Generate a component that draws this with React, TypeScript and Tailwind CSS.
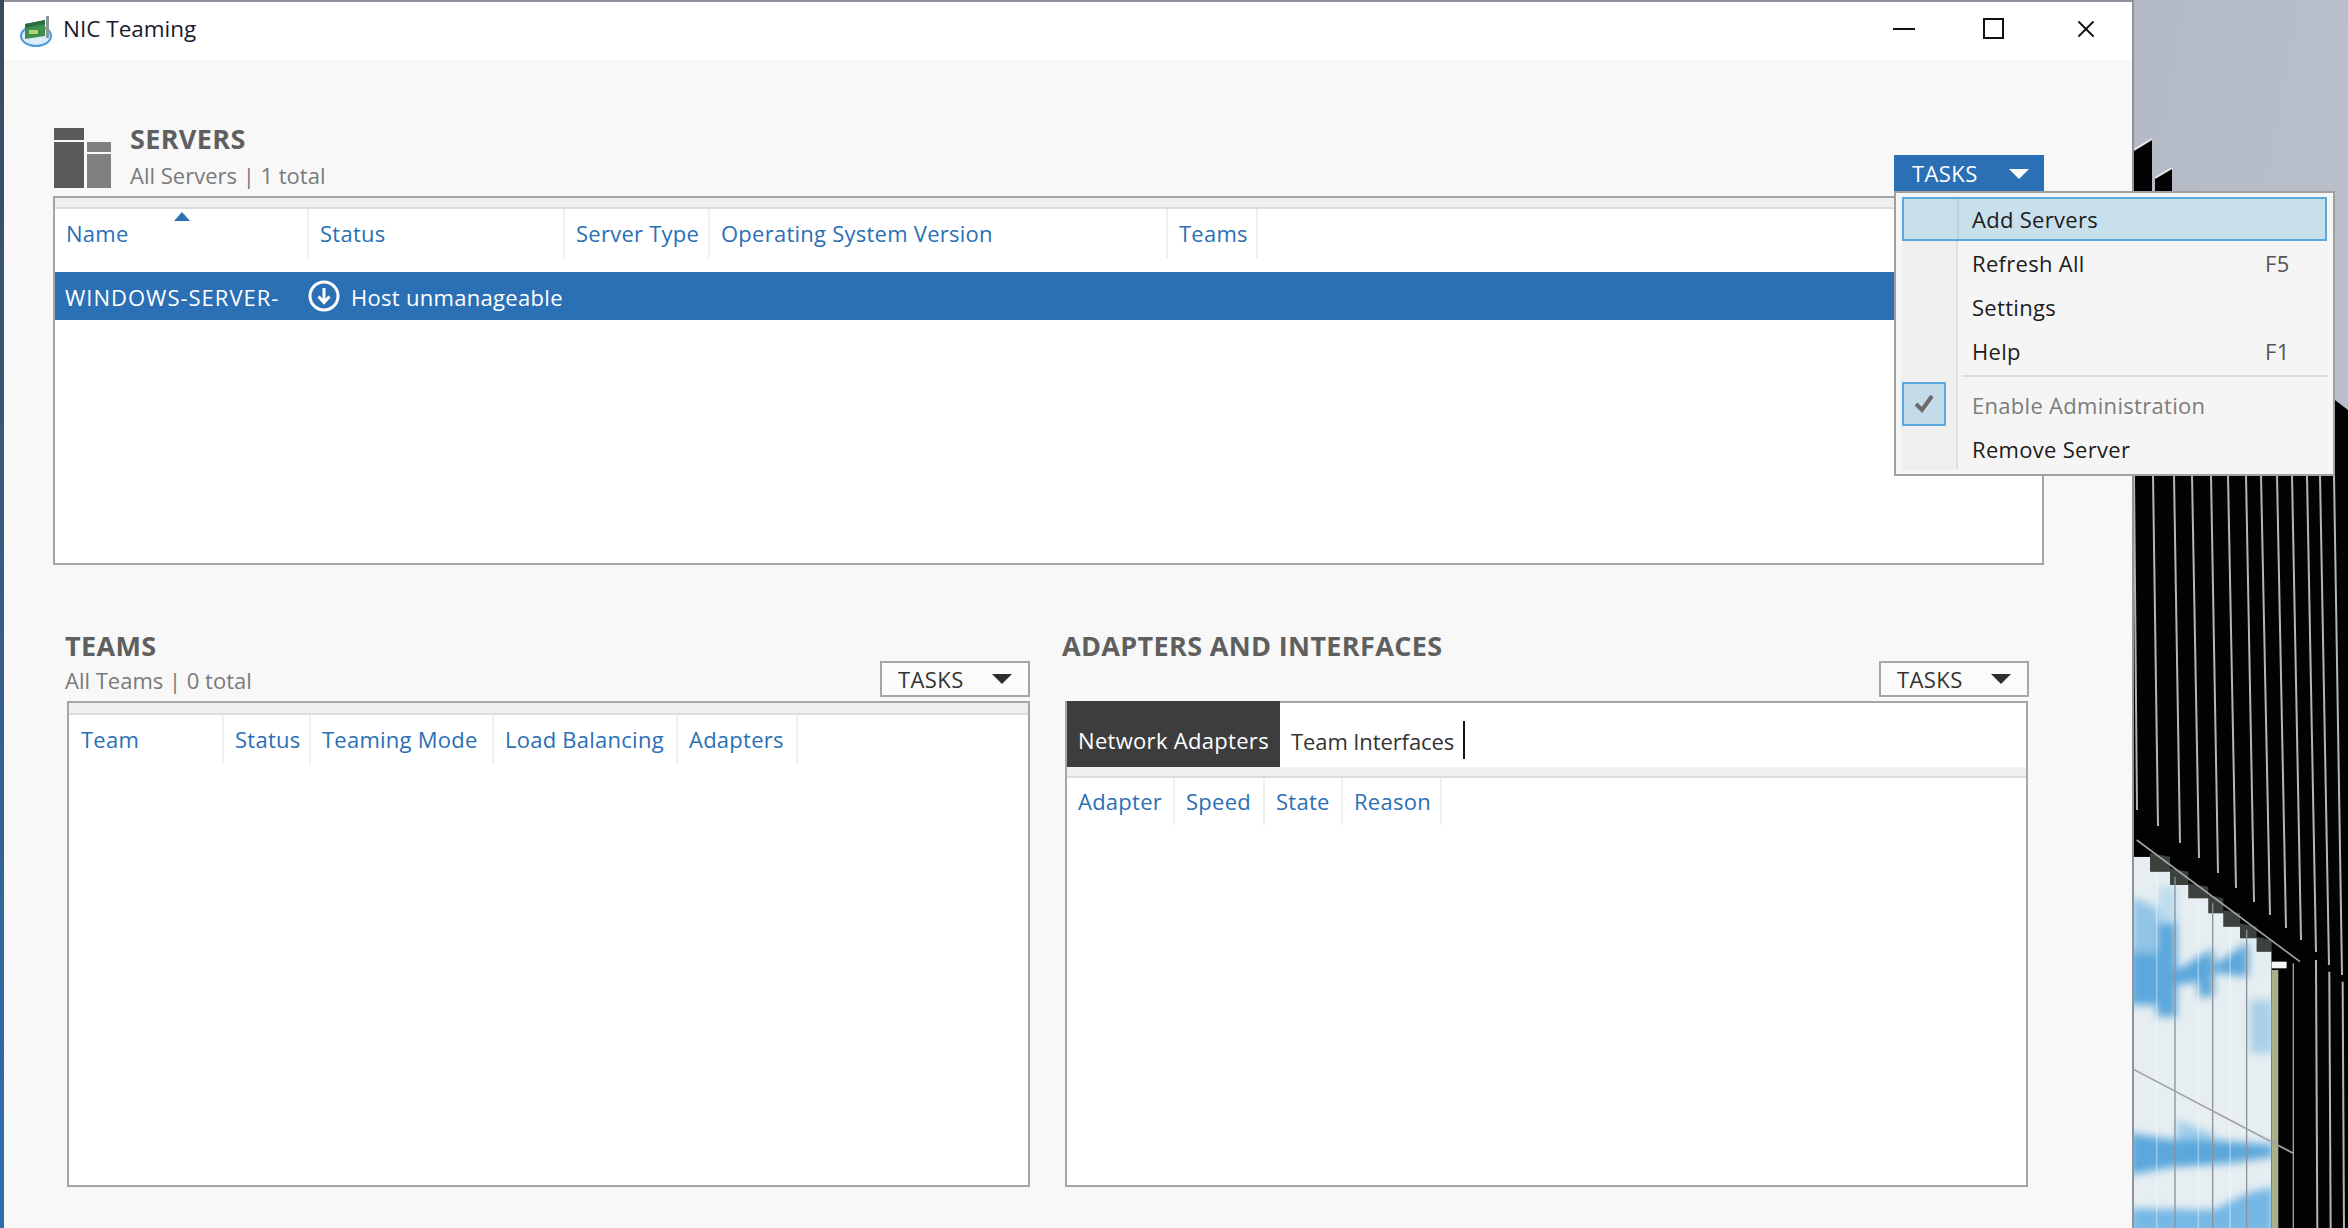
import React from 'react';
import { X } from 'lucide-react';

const font = "font-['Open_Sans','Noto_Sans',sans-serif]";

type Col = { label: string; width: string };

const serverCols: Col[] = [
  { label: 'Name', width: 'w-[254px]' },
  { label: 'Status', width: 'w-[256px]' },
  { label: 'Server Type', width: 'w-[145px]' },
  { label: 'Operating System Version', width: 'w-[458px]' },
  { label: 'Teams', width: 'w-[90px]' },
];

const teamCols: Col[] = [
  { label: 'Team', width: 'w-[155px]' },
  { label: 'Status', width: 'w-[87px]' },
  { label: 'Teaming Mode', width: 'w-[183px]' },
  { label: 'Load Balancing', width: 'w-[184px]' },
  { label: 'Adapters', width: 'w-[120px]' },
];

const adapterCols: Col[] = [
  { label: 'Adapter', width: 'w-[108px]' },
  { label: 'Speed', width: 'w-[90px]' },
  { label: 'State', width: 'w-[78px]' },
  { label: 'Reason', width: 'w-[99px]' },
];

const HeaderRow = ({ cols, left, height }: { cols: Col[]; left: string; height: string }) => (
  <div className={`flex ${height} relative`}>
    {cols.map((c, i) => (
      <div key={c.label} className={`${c.width} shrink-0 border-r-2 border-[#f0f0f0] flex items-center text-[22px] text-[#2b6fb5] whitespace-nowrap tracking-[0.25px] ${i === 0 ? left : 'pl-[11px]'}`}>
        {c.label}
      </div>
    ))}
  </div>
);

const TasksButton = () => (
  <div className="w-[150px] h-[36px] border-2 border-[#a6a6a6] bg-[#fbfbfb] flex items-center justify-between pl-[16px] pr-[16px] text-[22px] text-[#333333] tracking-[0.4px]">
    <span>TASKS</span>
    <svg width="20" height="12" viewBox="0 0 20 12"><path d="M0 1 H20 L10 11 Z" fill="#2e2e2e" /></svg>
  </div>
);

const NicIcon = () => (
  <svg width="32" height="32" viewBox="0 0 32 32" className="shrink-0">
    <ellipse cx="16" cy="21" rx="15" ry="10" fill="#dcecf8" stroke="#4a9bd8" strokeWidth="2" />
    <path d="M5 9 L25 5 V21 L5 24 Z" fill="#3f8f4f" />
    <path d="M5 9 L25 5 V9 L5 13 Z" fill="#2c6d3d" />
    <rect x="9" y="15" width="9" height="4" fill="#b4d46e" />
    <rect x="26" y="1" width="3" height="22" fill="#8a969c" />
  </svg>
);

const Wallpaper = () => {
  // top x, end y, end x of the light fins on the black facade
  const stripes: [number, number, number][] = [
    [2134, 810, 2137],
    [2153, 826, 2158],
    [2174, 843, 2180],
    [2192, 858, 2199],
    [2211, 873, 2218],
    [2228, 888, 2236],
    [2246, 902, 2254],
    [2261, 915, 2270],
    [2277, 928, 2286],
    [2292, 940, 2301],
    [2307, 952, 2316],
    [2320, 965, 2329],
    [2334, 975, 2342],
  ];
  // shaded steps under the diagonal beam, in crop coordinates (3x)
  const steps = [
    [15, 50, 60, 95],
    [60, 40, 120, 95],
    [120, 85, 175, 135],
    [175, 130, 235, 175],
    [235, 165, 280, 220],
    [280, 210, 330, 260],
    [330, 250, 380, 295],
    [380, 290, 425, 335],
  ];
  return (
    <svg viewBox="2134 0 214 1228" width="214" height="1228" className="block">
      <defs>
        <linearGradient id="sky" x1="0" y1="0" x2="1" y2="1">
          <stop offset="0" stopColor="#b3b9c5" />
          <stop offset="1" stopColor="#bcc3cf" />
        </linearGradient>
        <filter id="soft" x="-30%" y="-30%" width="160%" height="160%">
          <feGaussianBlur stdDeviation="13" />
        </filter>
        <clipPath id="glass">
          <path d="M10 50 H60 V95 H120 V135 H175 V175 H235 V220 H280 V260 H330 V295 H380 V335 H425 V1164 H10 Z" />
        </clipPath>
      </defs>
      <rect x="2134" y="0" width="214" height="1228" fill="url(#sky)" />
      {/* building: two fins above the menu, black facade below it */}
      <path d="M2134 150 L2152 139 V192 H2155 V178 L2172 168 V200 L2335 400 L2348 410 V1228 H2134 Z" fill="#020202" />
      <path d="M2134 150 L2152 139 M2155 178 L2172 168" stroke="#e8e8e8" strokeWidth="2" fill="none" />
      <g stroke="#b4b4b4" strokeWidth="2">
        {stripes.map(([x1, y, x2]) => (
          <line key={x1} x1={x1} y1={475} x2={x2} y2={y} />
        ))}
      </g>

      {/* glass front, drawn in the 3x coordinates of a crop at 2130,840 */}
      <g transform="translate(2130 840) scale(0.3333)">
        {steps.map(([x1, y1, x2, y2]) => (
          <path key={x1} d={`M${x1} ${y1} L${x2} ${y1 + 10} V${y2} H${x1} Z`} fill="#3b423e" />
        ))}
        <g clipPath="url(#glass)">
          <rect x="0" y="0" width="430" height="1164" fill="#e6eef1" />
          <g filter="url(#soft)">
            <path d="M5 170 L85 205 V340 L5 350 Z" fill="#93c5e6" />
            <path d="M85 140 H140 V260 H85 Z" fill="#bcdcee" />
            <path d="M360 480 H430 V640 H360 Z" fill="#a9d0e8" />
            <path d="M140 840 L245 880 V960 H140 Z" fill="#9fcde9" />
          </g>
          <g filter="url(#soft)" fill="#5ca7dc">
            <path d="M0 335 H85 V495 H0 Z" />
            <path d="M80 250 H140 V530 H80 Z" />
            <path d="M140 390 L250 325 V470 H205 V425 L140 435 Z" />
            <path d="M245 380 L355 305 V410 L300 405 L245 395 Z" />
            <path d="M0 880 L130 900 L245 900 L430 915 V950 L300 970 L130 980 L0 1005 Z" />
          </g>
          <path d="M0 1105 L250 1110 L350 1060 L430 1040 V1180 H0 Z" fill="#74b7e5" filter="url(#soft)" />
          <g stroke="#ffffff" strokeOpacity="0.35" strokeWidth="5">
            <line x1="80" y1="100" x2="80" y2="1164" />
            <line x1="205" y1="180" x2="205" y2="1164" />
            <line x1="300" y1="260" x2="300" y2="1164" />
          </g>
        </g>
        <path d="M425 365 H470 V385 H425 Z" fill="#f4f4f4" />
        <rect x="425" y="390" width="20" height="774" fill="#a9b08a" />
        <g stroke="#8d9298" strokeWidth="4">
          <line x1="8" y1="0" x2="8" y2="1164" />
          <line x1="135" y1="110" x2="135" y2="1164" />
          <line x1="248" y1="190" x2="248" y2="1164" />
          <line x1="350" y1="270" x2="350" y2="1164" />
        </g>
        <g stroke="#a0a4a6" strokeWidth="5">
          <line x1="10" y1="688" x2="490" y2="940" />
          <line x1="20" y1="0" x2="510" y2="365" />
          <line x1="490" y1="370" x2="490" y2="1164" strokeWidth="4" />
        </g>
        <g stroke="#b4b4b4" strokeWidth="6">
          <line x1="558" y1="360" x2="562" y2="1164" />
          <line x1="598" y1="395" x2="602" y2="1164" />
          <line x1="638" y1="425" x2="642" y2="1164" />
        </g>
      </g>
    </svg>
  );
};

const MenuRow = ({ label, shortcut, dim }: { label: string; shortcut?: string; dim?: boolean }) => (
  <div className={`h-[44px] flex items-center justify-between pl-[76px] pr-[44px] text-[22px] tracking-[0.3px] ${dim ? 'text-[#7c7c7c]' : 'text-[#1c1c1c]'}`}>
    <span>{label}</span>
    {shortcut && <span className="w-[24px] text-[#555555]">{shortcut}</span>}
  </div>
);

const TasksMenu = () => (
  <div className="absolute left-[1894px] top-[191px] w-[441px] h-[285px] border-2 border-[#a0a0a0] bg-[#f5f5f5] z-10 pt-[4px] pl-[6px] pr-[6px]">
    <div className="absolute left-[6px] top-[4px] bottom-[4px] w-[56px] bg-[#efefef] border-r-2 border-[#e0e0e0]" />
    <div className="relative h-[44px] flex items-center border-2 border-[#5aa9dc] bg-[#c8dfec] text-[22px] tracking-[0.3px] text-[#1c1c1c] pl-[68px]">
      <span>Add Servers</span>
      <div className="absolute left-[53px] top-0 bottom-0 w-[2px] bg-[#b9d2e0]" />
    </div>
    <div className="relative -mx-[6px]">
      <MenuRow label="Refresh All" shortcut="F5" />
      <MenuRow label="Settings" />
      <MenuRow label="Help" shortcut="F1" />
      <div className="h-[2px] ml-[66px] mr-[6px] bg-[#dcdcdc] mt-[2px] mb-[6px]" />
      <div className="relative">
        <MenuRow label="Enable Administration" dim />
        <div className="absolute left-[6px] top-[-1px] w-[44px] h-[44px] border-2 border-[#5aa9dc] bg-[#c4dcea] flex items-center justify-center">
          <svg width="22" height="20" viewBox="0 0 22 20"><path d="M3 10 L9 16 L19 2" fill="none" stroke="#6b6b6b" strokeWidth="4" /></svg>
        </div>
      </div>
      <MenuRow label="Remove Server" />
    </div>
  </div>
);

export default function App() {
  return (
    <div className={`relative flex w-[2348px] h-[1228px] overflow-hidden bg-white ${font}`}>
      {/* desktop sliver left of the window */}
      <div className="w-[4px] shrink-0 bg-gradient-to-b from-[#3a4a5c] to-[#2d6fb0]" />

      {/* window */}
      <div className="w-[2130px] h-[1228px] shrink-0 flex flex-col border-t-2 border-r-2 border-[#8d949c]">
        <div className="h-[58px] shrink-0 bg-white flex items-center">
          <div className="ml-[16px] mr-[11px]"><NicIcon /></div>
          <span className="text-[22.5px] text-[#1a1a2e] -mt-[5px]">NIC Teaming</span>
          <div className="ml-auto flex items-center -mt-[5px]">
            <div className="w-[22px] h-[2px] bg-[#111111] mr-[68px]" />
            <div className="w-[21px] h-[21px] border-2 border-[#111111] mr-[68px]" />
            <X className="w-[28px] h-[28px] text-[#111111] mr-[32px]" strokeWidth={1.6} absoluteStrokeWidth />
          </div>
        </div>

        <div className="flex-1 bg-[#f8f8f8] pl-[49px] pr-[88px] pt-[68px] flex flex-col">
          {/* servers */}
          <div className="flex items-end h-[69px]">
            <div className="flex items-end gap-[3px] w-[76px] ml-[1px] shrink-0 mb-[9px]">
              <div className="w-[30px] flex flex-col gap-[2px]">
                <div className="h-[12px] bg-[#5a5a5a]" />
                <div className="h-[46px] bg-[#595959]" />
              </div>
              <div className="w-[24px] flex flex-col gap-[2px]">
                <div className="h-[10px] bg-[#808080]" />
                <div className="h-[34px] bg-[#808080]" />
              </div>
            </div>
            <div className="flex flex-col mb-[4px]">
              <span className="text-[27px] leading-[32px] font-bold text-[#5f5f5f] tracking-[0.35px] mb-[2px]">SERVERS</span>
              <span className="text-[22px] leading-[36px] text-[#7a7a7a]">All Servers | 1 total</span>
            </div>
            <div className="ml-auto self-start mt-[27px] w-[150px] h-[37px] bg-[#2b6fb5] text-white flex items-center justify-between pl-[18px] pr-[15px] text-[22px] tracking-[0.4px]">
              <span>TASKS</span>
              <svg width="20" height="12" viewBox="0 0 20 12"><path d="M0 1 H20 L10 11 Z" fill="#ffffff" /></svg>
            </div>
          </div>

          <div className="h-[369px] border-2 border-[#a6a6a6] bg-white flex flex-col mt-[-1px] relative">
            <div className="h-[11px] bg-[#f0f0f0] border-b-2 border-[#dcdcdc] shrink-0" />
            <svg width="16" height="9" viewBox="0 0 16 9" className="absolute left-[119px] top-[14px]"><path d="M8 0 L16 9 H0 Z" fill="#2b6fb5" /></svg>
            <HeaderRow cols={serverCols} left="pl-[11px]" height="h-[49px]" />
            <div className="h-[48px] mt-[14px] bg-[#2b6fb5] text-white text-[22px] flex items-center">
              <span className="pl-[10px] pt-[2px] w-[253px] shrink-0 whitespace-nowrap tracking-[1px]">WINDOWS-SERVER-</span>
              <svg width="32" height="32" viewBox="0 0 32 32" className="shrink-0">
                <circle cx="16" cy="16" r="14" fill="none" stroke="#ffffff" strokeWidth="3" />
                <path d="M16 8 V22 M10.5 16.5 L16 22.5 L21.5 16.5" fill="none" stroke="#ffffff" strokeWidth="3" />
              </svg>
              <span className="ml-[11px] pt-[2px] whitespace-nowrap tracking-[0.3px]">Host unmanageable</span>
            </div>
          </div>

          {/* lower panels */}
          <div className="flex mt-[65px] flex-1">
            <div className="w-[963px] ml-[14px] shrink-0 flex flex-col relative">
              <span className="text-[27px] leading-[32px] font-bold text-[#5f5f5f] tracking-[0.35px] -ml-[2px]">TEAMS</span>
              <div className="flex items-end justify-between h-[35px] mb-[4px]">
                <span className="text-[22px] leading-[30px] text-[#7a7a7a] -ml-[2px] mb-[2px]">All Teams | 0 total</span>
                <TasksButton />
              </div>
              <div className="h-[486px] border-2 border-[#a6a6a6] bg-white flex flex-col">
                <div className="h-[12px] bg-[#f0f0f0] border-b-2 border-[#dcdcdc] shrink-0" />
                <HeaderRow cols={teamCols} left="pl-[12px]" height="h-[49px]" />
              </div>
            </div>

            <div className="w-[963px] ml-[35px] shrink-0 flex flex-col">
              <span className="text-[27px] leading-[32px] font-bold text-[#5f5f5f] tracking-[0.35px] -ml-[3px] whitespace-nowrap">ADAPTERS AND INTERFACES</span>
              <div className="flex justify-end h-[35px] mb-[4px] items-end">
                <div className="mr-[-1px]"><TasksButton /></div>
              </div>
              <div className="h-[486px] border-2 border-[#a6a6a6] bg-white flex flex-col">
                <div className="flex h-[64px] shrink-0">
                  <div className="w-[213px] -mt-[2px] bg-[#3d3d3d] text-white text-[22px] tracking-[0.3px] flex items-center justify-center pt-[13px] whitespace-nowrap">Network Adapters</div>
                  <div className="pl-[11px] flex items-center pt-[12px] text-[22px] tracking-[-0.1px] text-[#333333] whitespace-nowrap">Team Interfaces</div>
                  <div className="w-[2px] h-[38px] bg-[#111111] ml-[9px] mt-[18px]" />
                </div>
                <div className="h-[11px] bg-[#f0f0f0] border-b-2 border-[#dcdcdc] shrink-0" />
                <HeaderRow cols={adapterCols} left="pl-[11px]" height="h-[47px]" />
              </div>
            </div>
          </div>
        </div>
      </div>

      <Wallpaper />
      <TasksMenu />
    </div>
  );
}
